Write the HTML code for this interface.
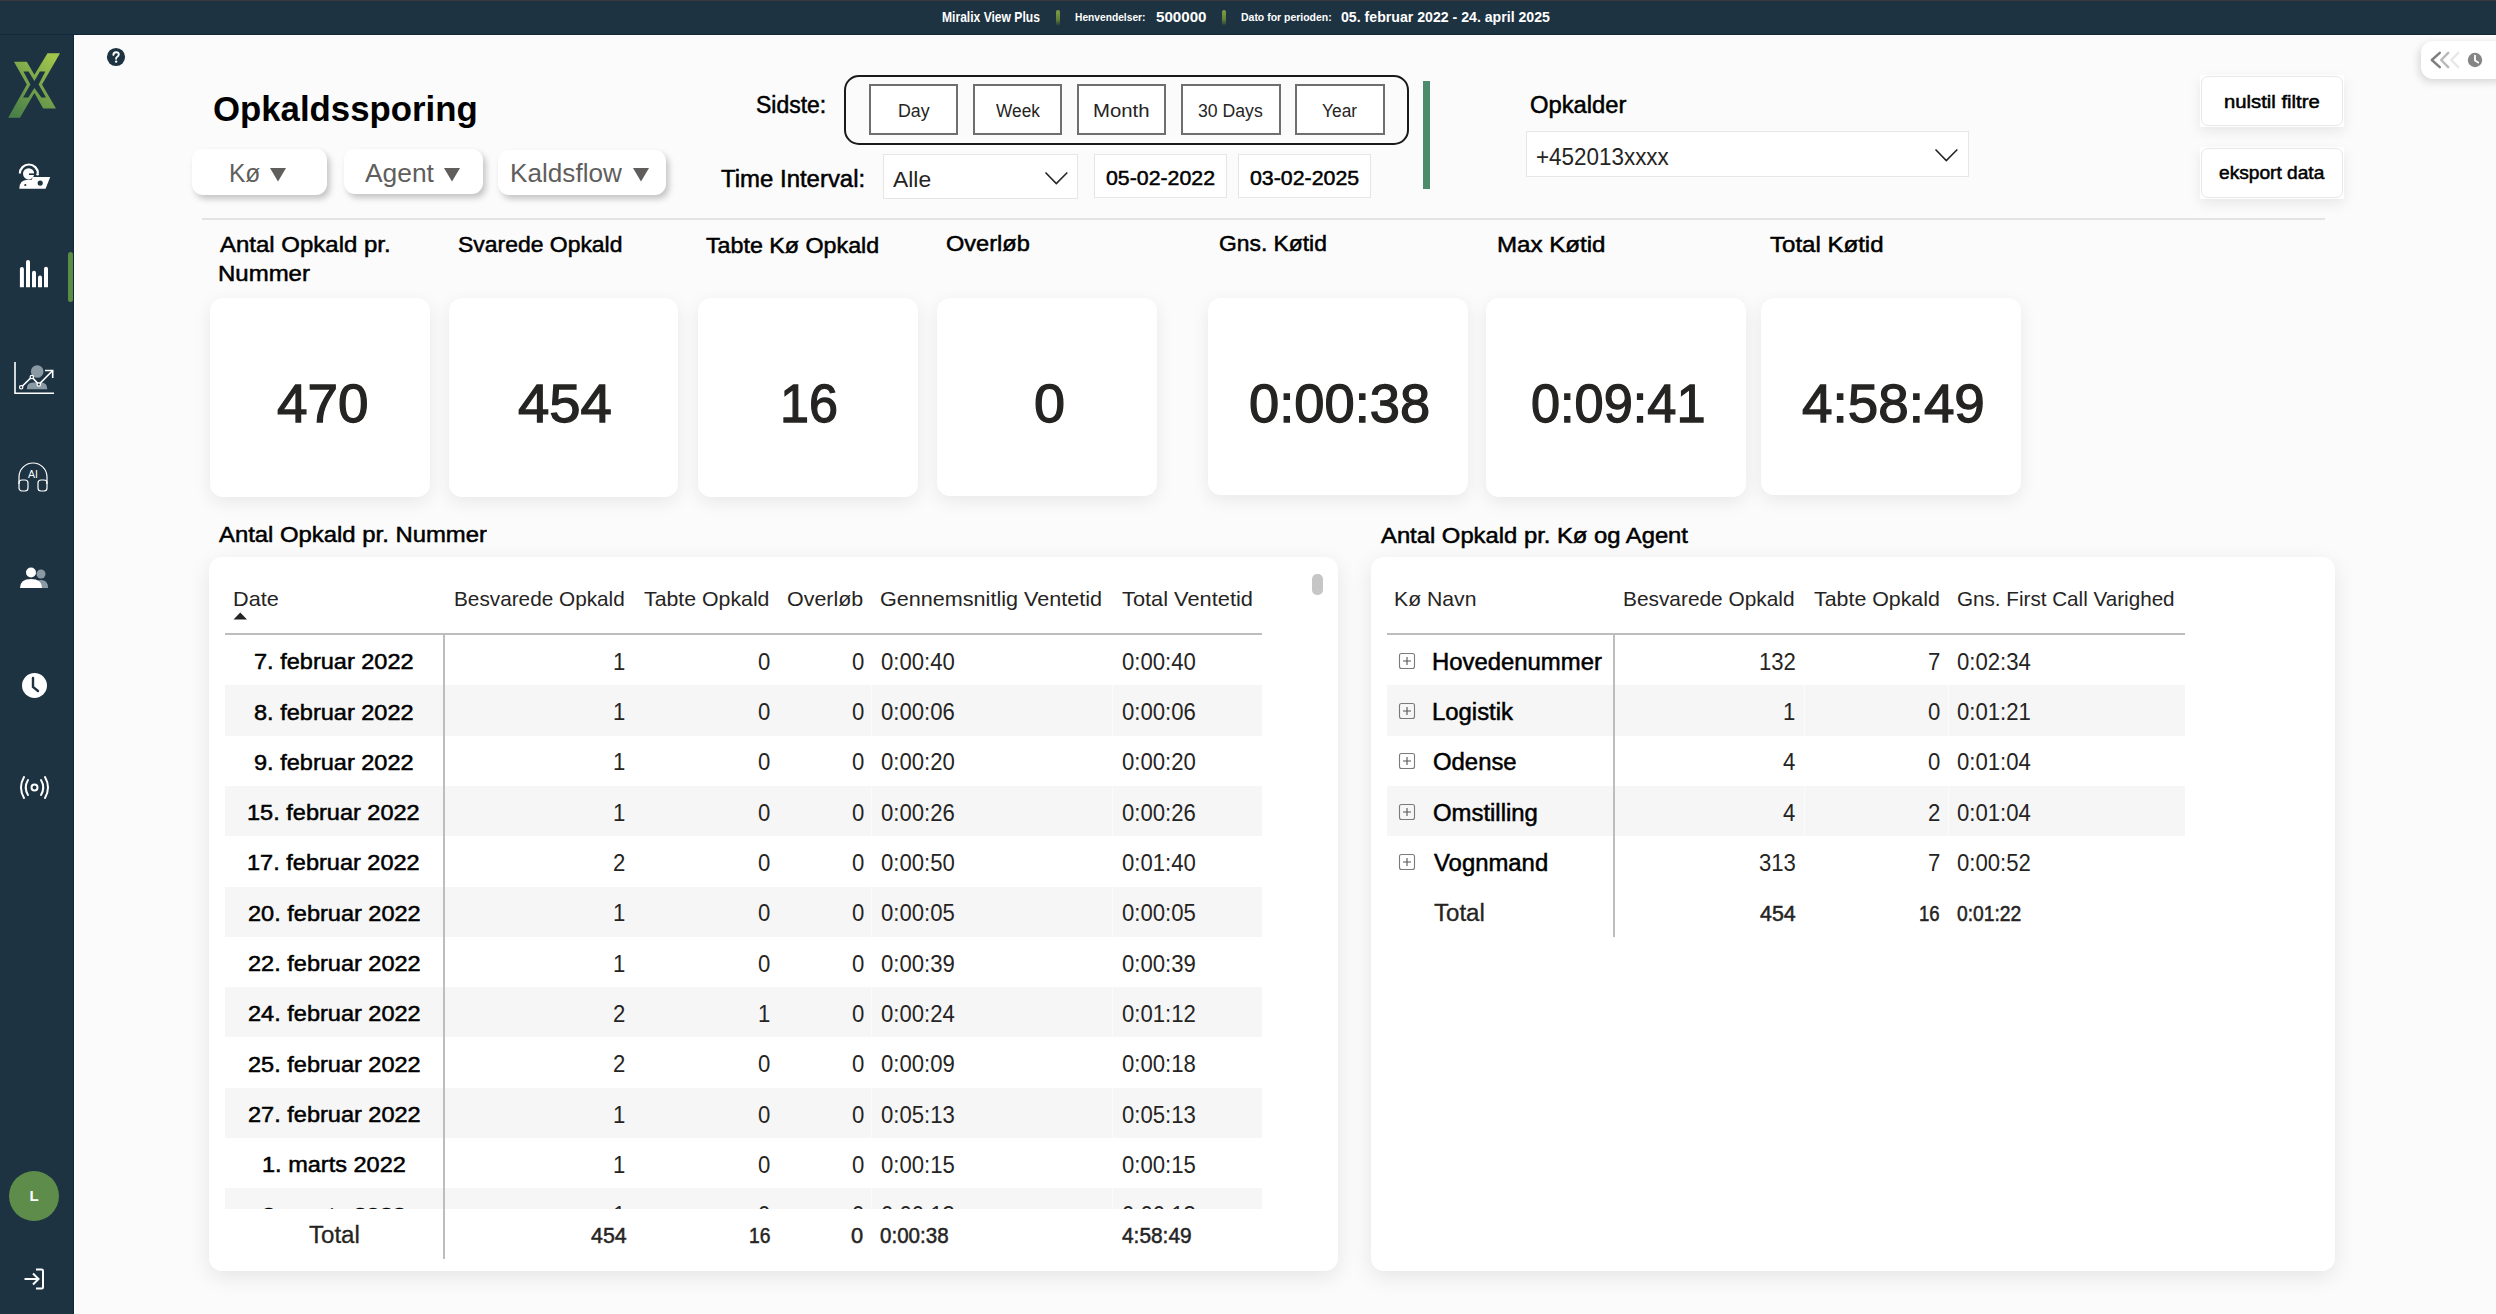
<!DOCTYPE html>
<html><head><meta charset="utf-8"><title>Opkaldssporing</title>
<style>
html,body{margin:0;padding:0;}
body{width:2496px;height:1314px;position:relative;overflow:hidden;background:#fbfbfb;font-family:'Liberation Sans', sans-serif;}
.t{position:absolute;white-space:nowrap;line-height:1;transform-origin:0 50%;}
</style></head><body>
<div style="position:absolute;left:0px;top:0px;width:2496px;height:35px;background:#1d3342;"></div>
<div style="position:absolute;left:0px;top:0px;width:2496px;height:1px;background:#38393c;"></div>
<div style="position:absolute;left:0px;top:35px;width:74px;height:1279px;background:#1d3342;"></div>
<div style="position:absolute;left:0px;top:34px;width:2496px;height:1px;background:#10283a;"></div>
<div style="position:absolute;left:73px;top:35px;width:1px;height:1279px;background:#10283a;"></div>
<div style="position:absolute;left:74px;top:35px;width:2px;height:1279px;background:#ffffff;"></div>
<div style="position:absolute;left:74px;top:35px;width:2422px;height:1px;background:#ffffff;"></div>
<div class="t" style="left:942.11px;top:9.75px;font-size:14.5px;font-weight:700;color:#ffffff;transform:scaleX(0.8338);">Miralix View Plus</div>
<div class="t" style="left:1075.34px;top:12.28px;font-size:11.5px;font-weight:700;color:#ffffff;transform:scaleX(0.8889);">Henvendelser:</div>
<div class="t" style="left:1155.55px;top:9.75px;font-size:14.5px;font-weight:700;color:#ffffff;transform:scaleX(1.0435);">500000</div>
<div class="t" style="left:1241.32px;top:12.28px;font-size:11.5px;font-weight:700;color:#ffffff;transform:scaleX(0.9100);">Dato for perioden:</div>
<div class="t" style="left:1341.43px;top:9.75px;font-size:14.5px;font-weight:700;color:#ffffff;transform:scaleX(0.9745);">05. februar 2022 - 24. april 2025</div>
<div style="position:absolute;left:1056px;top:10px;width:4px;height:16px;border-radius:2px;background:linear-gradient(#7f9f45,#5f7f35 60%,rgba(80,110,50,0));"></div>
<div style="position:absolute;left:1222px;top:10px;width:4px;height:16px;border-radius:2px;background:linear-gradient(#7f9f45,#5f7f35 60%,rgba(80,110,50,0));"></div>
<svg style="position:absolute;left:0;top:0" width="74" height="130" viewBox="0 0 74 130">
<defs><linearGradient id="lg" x1="0.8" y1="0" x2="0.2" y2="1"><stop offset="0" stop-color="#a2c64c"/><stop offset="1" stop-color="#4a8049"/></linearGradient></defs>
<path fill-rule="evenodd" fill="url(#lg)" d="M47.5 53.2 L60 53.2 L42 84.6 L56 108.6 L43.2 108.6 L34.4 93.1 L20 117.7 L8.2 117.7 L26.8 84.6 L14 61.7 L26.8 61.7 L34.4 74.8 Z M23.4 71.5 L28.6 71.5 L34.4 80.9 L39.9 71.5 L45.3 71.5 L38.6 84.6 L46 97.6 L41.4 97.6 L34.4 87.9 L28.3 97.6 L23.1 97.6 L30.4 84.6 Z"/>
</svg>
<div style="position:absolute;left:68px;top:252px;width:5px;height:50px;background:#5c8c46;border-radius:3px;"></div>
<svg style="position:absolute;left:0;top:150px" width="74" height="50" viewBox="0 150 74 50">
<path d="M19.9 173.5 A9 9 0 0 1 37.9 173.5" stroke="#fff" stroke-width="2.2" fill="none"/>
<circle cx="28.6" cy="173.8" r="5.6" fill="#fff"/>
<path d="M29 174.2 H37.5" stroke="#1d3342" stroke-width="1.6"/>
<circle cx="37.6" cy="174.2" r="1.3" fill="#fff"/>
<path d="M19.3 188.7 Q19.5 180 27.5 179.8 L33.2 179.8 L29.2 188.7 Z" fill="#fff"/>
<polygon points="32.8,177 50.2,177 45.6,188.7 28.6,188.7" fill="#fff"/>
<circle cx="40.2" cy="183.1" r="2.6" fill="#1d3342"/>
<circle cx="25.3" cy="185" r="1.1" fill="#1d3342"/>
</svg>
<svg style="position:absolute;left:0;top:250px" width="74" height="45" viewBox="0 250 74 45">
<path d="M19.9 287.3 V269 a2 2 0 0 1 4 0 V287.3 Z" fill="#fff"/>
<path d="M26 287.3 V262 a2 2 0 0 1 4 0 V287.3 Z" fill="#fff"/>
<path d="M32 287.3 V272.8 a2 2 0 0 1 4 0 V287.3 Z" fill="#fff"/>
<path d="M38 287.3 V277.6 a2 2 0 0 1 4 0 V287.3 Z" fill="#fff"/>
<path d="M44 287.3 V268.7 a2 2 0 0 1 4 0 V287.3 Z" fill="#fff"/>
</svg>
<svg style="position:absolute;left:14px;top:360px" width="42" height="36" viewBox="0 0 42 36">
<circle cx="23.2" cy="11.5" r="6.3" fill="#8a9aa5"/>
<path d="M12.7 29.3 Q12.7 22.5 19 22.5 L27 22.5 Q33.3 22.5 33.3 29.3 Z" fill="#8a9aa5"/>
<path d="M1 2 V33.3 H40" stroke="#fff" stroke-width="1.6" fill="none"/>
<polyline points="7.2,27.3 17.8,17 24.8,24.5 38.7,10.5" stroke="#fff" stroke-width="1.6" fill="none"/>
<polyline points="31,10.5 38.7,10.5 38.7,18" stroke="#fff" stroke-width="1.6" fill="none"/>
<circle cx="7.2" cy="27.3" r="1.7" fill="#1d3342" stroke="#fff" stroke-width="1.2"/>
<circle cx="17.8" cy="17" r="1.7" fill="#1d3342" stroke="#fff" stroke-width="1.2"/>
<circle cx="24.8" cy="24.5" r="1.7" fill="#1d3342" stroke="#fff" stroke-width="1.2"/>
</svg>
<svg style="position:absolute;left:16px;top:462px" width="34" height="32" viewBox="0 0 34 32">
<path d="M3 22 V15 A14 14 0 0 1 31 15 V22" stroke="#fff" stroke-width="1.2" fill="none"/>
<rect x="3" y="18" width="9" height="11" rx="3" stroke="#fff" stroke-width="1.2" fill="none"/>
<rect x="22" y="18" width="9" height="11" rx="3" stroke="#fff" stroke-width="1.2" fill="none"/>
<text x="17" y="15.5" font-family="Liberation Sans" font-size="10.5" fill="#fff" text-anchor="middle">AI</text>
</svg>
<svg style="position:absolute;left:18px;top:566px" width="34" height="28" viewBox="0 0 34 28">
<circle cx="23" cy="8" r="4.5" fill="#8a9aa5"/>
<path d="M16 22 Q16 14 23 14 Q30 14 30 22 Z" fill="#8a9aa5"/>
<circle cx="13" cy="6.5" r="5" fill="#fff"/>
<path d="M2 22 Q2 13 13 13 Q24 13 24 22 Z" fill="#fff"/>
</svg>
<svg style="position:absolute;left:20px;top:671px" width="30" height="30" viewBox="0 0 30 30">
<circle cx="14.5" cy="14.5" r="12.5" fill="#fff"/>
<path d="M13 7 V16 L18 20" stroke="#1d3342" stroke-width="2.4" fill="none" stroke-linecap="round"/>
</svg>
<svg style="position:absolute;left:18px;top:774px" width="34" height="28" viewBox="0 0 34 28">
<circle cx="16.5" cy="13.5" r="3" stroke="#fff" stroke-width="2" fill="none"/>
<path d="M10 6 Q5.5 13.5 10 21" stroke="#fff" stroke-width="2" fill="none" stroke-linecap="round"/>
<path d="M23 6 Q27.5 13.5 23 21" stroke="#fff" stroke-width="2" fill="none" stroke-linecap="round"/>
<path d="M6 3 Q0 13.5 6 24" stroke="#fff" stroke-width="2" fill="none" stroke-linecap="round"/>
<path d="M27 3 Q33 13.5 27 24" stroke="#fff" stroke-width="2" fill="none" stroke-linecap="round"/>
</svg>
<div style="position:absolute;left:9px;top:1171px;width:50px;height:50px;background:#5e8c4a;border-radius:50%;"></div>
<div class="t" style="left:29.46px;top:1187.53px;font-size:15px;font-weight:700;color:#fff;">L</div>
<svg style="position:absolute;left:22px;top:1266px" width="26" height="26" viewBox="0 0 26 26">
<path d="M14 3.5 H19.5 Q21 3.5 21 5 V21 Q21 22.5 19.5 22.5 H14" stroke="#fff" stroke-width="2" fill="none"/>
<path d="M2.5 13 H16 M11 7.5 L16.5 13 L11 18.5" stroke="#fff" stroke-width="2" fill="none"/>
</svg>
<svg style="position:absolute;left:105.5px;top:46.5px" width="20" height="20" viewBox="0 0 20 20">
<circle cx="10" cy="10" r="9.1" fill="#1d3342"/>
<path d="M7.4 7.9 Q7.4 5.2 10.1 5.2 Q12.8 5.2 12.8 7.6 Q12.8 9.1 11 10 Q10.1 10.5 10.1 11.8" stroke="#fff" stroke-width="1.9" fill="none" stroke-linecap="round"/>
<circle cx="10.1" cy="14.6" r="1.2" fill="#fff"/>
</svg>
<div class="t" style="left:212.81px;top:91.93px;font-size:34.4px;font-weight:700;color:#000000;transform:scaleX(1.0110);">Opkaldssporing</div>
<div style="position:absolute;left:192px;top:149px;width:135px;height:46px;background:#fff;border-radius:11px;box-shadow:3px 4px 6px rgba(0,0,0,0.22);"></div>
<div class="t" style="left:228.54px;top:160.68px;font-size:25px;font-weight:400;color:#605e5c;transform:scaleX(0.9812);">Kø</div>
<svg style="position:absolute;left:270.4px;top:168px" width="16" height="14" viewBox="0 0 16 14"><polygon points="0,0 16,0 8,13.6" fill="#605e5c"/></svg>
<div style="position:absolute;left:344px;top:149px;width:139px;height:45px;background:#fff;border-radius:11px;box-shadow:3px 4px 6px rgba(0,0,0,0.22);"></div>
<div class="t" style="left:364.60px;top:160.68px;font-size:25px;font-weight:400;color:#605e5c;transform:scaleX(1.0549);">Agent</div>
<svg style="position:absolute;left:444px;top:168px" width="16" height="14" viewBox="0 0 16 14"><polygon points="0,0 16,0 8,13.6" fill="#605e5c"/></svg>
<div style="position:absolute;left:498px;top:150px;width:168px;height:45px;background:#fff;border-radius:11px;box-shadow:3px 4px 6px rgba(0,0,0,0.22);"></div>
<div class="t" style="left:509.81px;top:160.68px;font-size:25px;font-weight:400;color:#605e5c;transform:scaleX(1.0454);">Kaldsflow</div>
<svg style="position:absolute;left:632.6px;top:168px" width="16" height="14" viewBox="0 0 16 14"><polygon points="0,0 16,0 8,13.6" fill="#605e5c"/></svg>
<div class="t" style="left:756.12px;top:93.66px;font-size:23px;font-weight:400;color:#000;-webkit-text-stroke:0.5px #000;transform:scaleX(0.9976);">Sidste:</div>
<div style="position:absolute;left:844px;top:75px;width:565px;height:70px;box-sizing:border-box;border:2.2px solid #1a1a1a;border-radius:15px;"></div>
<div style="position:absolute;left:869px;top:84px;width:89px;height:51px;box-sizing:border-box;border:2px solid #6f6f6f;background:#fff;"></div>
<div class="t" style="left:897.57px;top:101.54px;font-size:18.3px;font-weight:400;color:#252423;transform:scaleX(0.9740);">Day</div>
<div style="position:absolute;left:973px;top:84px;width:89px;height:51px;box-sizing:border-box;border:2px solid #6f6f6f;background:#fff;"></div>
<div class="t" style="left:995.61px;top:101.54px;font-size:18.3px;font-weight:400;color:#252423;transform:scaleX(0.9463);">Week</div>
<div style="position:absolute;left:1077px;top:84px;width:89px;height:51px;box-sizing:border-box;border:2px solid #6f6f6f;background:#fff;"></div>
<div class="t" style="left:1093.37px;top:101.54px;font-size:18.3px;font-weight:400;color:#252423;transform:scaleX(1.1116);">Month</div>
<div style="position:absolute;left:1181px;top:84px;width:100px;height:51px;box-sizing:border-box;border:2px solid #6f6f6f;background:#fff;"></div>
<div class="t" style="left:1198.49px;top:101.54px;font-size:18.3px;font-weight:400;color:#252423;transform:scaleX(0.9652);">30 Days</div>
<div style="position:absolute;left:1295px;top:84px;width:90px;height:51px;box-sizing:border-box;border:2px solid #6f6f6f;background:#fff;"></div>
<div class="t" style="left:1322.17px;top:101.54px;font-size:18.3px;font-weight:400;color:#252423;transform:scaleX(0.9494);">Year</div>
<div class="t" style="left:721.02px;top:168.37px;font-size:23px;font-weight:400;color:#000;-webkit-text-stroke:0.5px #000;transform:scaleX(1.0411);">Time Interval:</div>
<div style="position:absolute;left:883px;top:154px;width:195px;height:45px;box-sizing:border-box;border:1.5px solid #e6e6e6;background:#fff;"></div>
<div class="t" style="left:893.30px;top:168.96px;font-size:22.3px;font-weight:400;color:#252423;transform:scaleX(1.0242);">Alle</div>
<svg style="position:absolute;left:1044px;top:171px" width="25" height="15" viewBox="0 0 25 15"><polyline points="1.5,1.5 12.3,12.5 23.3,1.5" stroke="#252423" stroke-width="1.6" fill="none"/></svg>
<div style="position:absolute;left:1094px;top:154px;width:133px;height:44px;box-sizing:border-box;border:1.5px solid #e6e6e6;background:#fff;"></div>
<div class="t" style="left:1105.80px;top:166.95px;font-size:21px;font-weight:400;color:#000;-webkit-text-stroke:0.5px #000;transform:scaleX(1.0149);">05-02-2022</div>
<div style="position:absolute;left:1238px;top:154px;width:133px;height:44px;box-sizing:border-box;border:1.5px solid #e6e6e6;background:#fff;"></div>
<div class="t" style="left:1249.50px;top:166.95px;font-size:21px;font-weight:400;color:#000;-webkit-text-stroke:0.5px #000;transform:scaleX(1.0157);">03-02-2025</div>
<div style="position:absolute;left:1423px;top:81px;width:7px;height:108px;background:#4a8c6c;"></div>
<div class="t" style="left:1530.18px;top:93.56px;font-size:23px;font-weight:400;color:#000;-webkit-text-stroke:0.5px #000;transform:scaleX(1.0339);">Opkalder</div>
<div style="position:absolute;left:1526px;top:131px;width:443px;height:46px;box-sizing:border-box;border:1.5px solid #e6e6e6;background:#fff;"></div>
<div class="t" style="left:1535.88px;top:145.56px;font-size:23px;font-weight:400;color:#252423;transform:scaleX(0.9749);">+452013xxxx</div>
<svg style="position:absolute;left:1934px;top:148px" width="25" height="15" viewBox="0 0 25 15"><polyline points="1.5,1.5 12.3,12.5 23.3,1.5" stroke="#252423" stroke-width="1.6" fill="none"/></svg>
<div style="position:absolute;left:2200px;top:75px;width:144px;height:52px;background:#fff;box-shadow:0 5px 12px rgba(0,0,0,0.08);"></div>
<div style="position:absolute;left:2201px;top:76px;width:142px;height:50px;box-sizing:border-box;border:1.6px solid #e8e8e8;background:#fff;border-radius:7px;"></div>
<div class="t" style="left:2224.13px;top:92.69px;font-size:18px;font-weight:400;color:#000;-webkit-text-stroke:0.5px #000;transform:scaleX(1.1256);">nulstil filtre</div>
<div style="position:absolute;left:2200px;top:147px;width:144px;height:52px;background:#fff;box-shadow:0 5px 12px rgba(0,0,0,0.08);"></div>
<div style="position:absolute;left:2201px;top:148px;width:142px;height:50px;box-sizing:border-box;border:1.6px solid #e8e8e8;background:#fff;border-radius:7px;"></div>
<div class="t" style="left:2218.98px;top:164.49px;font-size:18px;font-weight:400;color:#000;-webkit-text-stroke:0.5px #000;transform:scaleX(1.0633);">eksport data</div>
<div style="position:absolute;left:2421px;top:41px;width:90px;height:38px;background:#fff;border-radius:12px;box-shadow:-2px 3px 8px rgba(0,0,0,0.15);"></div>
<svg style="position:absolute;left:2428px;top:50px" width="60" height="20" viewBox="0 0 60 20">
<g fill="none" stroke-width="2.4" stroke-linecap="round" stroke-linejoin="round">
<polyline points="11.8,2.8 3.8,10 11.8,17.2" stroke="#7d7d7d"/>
<polyline points="20.2,2.8 13.2,10 20.2,17.2" stroke="#b8b8b8"/>
<polyline points="30.2,2.8 23.2,10 30.2,17.2" stroke="#e8e8e8"/>
</g>
<circle cx="47" cy="10" r="7.2" fill="#858585"/>
<path d="M47 5.6 V10.6 L50.2 12.6" stroke="#fff" stroke-width="1.8" fill="none" stroke-linecap="round" stroke-linejoin="round"/>
</svg>
<div style="position:absolute;left:202px;top:218px;width:2123px;height:2px;background:#e4e4e4;"></div>
<div class="t" style="left:219.75px;top:233.61px;font-size:22px;font-weight:400;color:#000;-webkit-text-stroke:0.5px #000;transform:scaleX(1.0903);">Antal Opkald pr.</div>
<div class="t" style="left:457.72px;top:233.61px;font-size:22px;font-weight:400;color:#000;-webkit-text-stroke:0.5px #000;transform:scaleX(1.0424);">Svarede Opkald</div>
<div class="t" style="left:705.79px;top:235.01px;font-size:22px;font-weight:400;color:#000;-webkit-text-stroke:0.5px #000;transform:scaleX(1.0567);">Tabte Kø Opkald</div>
<div class="t" style="left:945.99px;top:233.41px;font-size:22px;font-weight:400;color:#000;-webkit-text-stroke:0.5px #000;transform:scaleX(1.0702);">Overløb</div>
<div class="t" style="left:1219.11px;top:233.41px;font-size:22px;font-weight:400;color:#000;-webkit-text-stroke:0.5px #000;transform:scaleX(1.0383);">Gns. Køtid</div>
<div class="t" style="left:1496.52px;top:233.71px;font-size:22px;font-weight:400;color:#000;-webkit-text-stroke:0.5px #000;transform:scaleX(1.0959);">Max Køtid</div>
<div class="t" style="left:1770.37px;top:233.71px;font-size:22px;font-weight:400;color:#000;-webkit-text-stroke:0.5px #000;transform:scaleX(1.0923);">Total Køtid</div>
<div class="t" style="left:217.83px;top:263.11px;font-size:22px;font-weight:400;color:#000;-webkit-text-stroke:0.5px #000;transform:scaleX(1.0903);">Nummer</div>
<div style="position:absolute;left:210px;top:298px;width:220px;height:199px;background:#fff;border-radius:13px;box-shadow:0 5px 18px rgba(0,0,0,0.08);"></div>
<div class="t" style="left:276.95px;top:376.65px;font-size:54.5px;font-weight:400;color:#252423;-webkit-text-stroke:1.3px #252423;transform:scaleX(1.0063);">470</div>
<div style="position:absolute;left:449px;top:298px;width:229px;height:199px;background:#fff;border-radius:13px;box-shadow:0 5px 18px rgba(0,0,0,0.08);"></div>
<div class="t" style="left:518.02px;top:376.65px;font-size:54.5px;font-weight:400;color:#252423;-webkit-text-stroke:1.3px #252423;transform:scaleX(1.0327);">454</div>
<div style="position:absolute;left:698px;top:298px;width:220px;height:199px;background:#fff;border-radius:13px;box-shadow:0 5px 18px rgba(0,0,0,0.08);"></div>
<div class="t" style="left:779.74px;top:376.65px;font-size:54.5px;font-weight:400;color:#252423;-webkit-text-stroke:1.3px #252423;transform:scaleX(0.9571);">16</div>
<div style="position:absolute;left:937px;top:298px;width:220px;height:198px;background:#fff;border-radius:13px;box-shadow:0 5px 18px rgba(0,0,0,0.08);"></div>
<div class="t" style="left:1033.72px;top:376.65px;font-size:54.5px;font-weight:400;color:#252423;-webkit-text-stroke:1.3px #252423;transform:scaleX(1.0245);">0</div>
<div style="position:absolute;left:1208px;top:298px;width:260px;height:197px;background:#fff;border-radius:13px;box-shadow:0 5px 18px rgba(0,0,0,0.08);"></div>
<div class="t" style="left:1249.48px;top:376.65px;font-size:54.5px;font-weight:400;color:#252423;-webkit-text-stroke:1.3px #252423;transform:scaleX(0.9961);">0:00:38</div>
<div style="position:absolute;left:1486px;top:298px;width:260px;height:199px;background:#fff;border-radius:13px;box-shadow:0 5px 18px rgba(0,0,0,0.08);"></div>
<div class="t" style="left:1531.26px;top:376.65px;font-size:54.5px;font-weight:400;color:#252423;-webkit-text-stroke:1.3px #252423;transform:scaleX(0.9598);">0:09:41</div>
<div style="position:absolute;left:1761px;top:298px;width:260px;height:197px;background:#fff;border-radius:13px;box-shadow:0 5px 18px rgba(0,0,0,0.08);"></div>
<div class="t" style="left:1802.05px;top:376.65px;font-size:54.5px;font-weight:400;color:#252423;-webkit-text-stroke:1.3px #252423;transform:scaleX(1.0055);">4:58:49</div>
<div class="t" style="left:219.00px;top:524.41px;font-size:22px;font-weight:400;color:#000;-webkit-text-stroke:0.5px #000;transform:scaleX(1.0847);">Antal Opkald pr. Nummer</div>
<div style="position:absolute;left:209px;top:557px;width:1129px;height:714px;background:#fff;border-radius:13px;box-shadow:0 6px 22px rgba(0,0,0,0.09);"></div>
<div style="position:absolute;left:1312px;top:574px;width:10.5px;height:21px;background:#c6c6c6;border-radius:5px;"></div>
<div class="t" style="left:232.67px;top:588.25px;font-size:21px;font-weight:400;color:#252423;transform:scaleX(1.0315);">Date</div>
<div class="t" style="left:453.64px;top:588.25px;font-size:21px;font-weight:400;color:#252423;transform:scaleX(0.9883);">Besvarede Opkald</div>
<div class="t" style="left:643.77px;top:588.25px;font-size:21px;font-weight:400;color:#252423;transform:scaleX(1.0139);">Tabte Opkald</div>
<div class="t" style="left:786.64px;top:588.25px;font-size:21px;font-weight:400;color:#252423;transform:scaleX(1.0210);">Overløb</div>
<div class="t" style="left:880.32px;top:588.25px;font-size:21px;font-weight:400;color:#252423;transform:scaleX(1.0282);">Gennemsnitlig Ventetid</div>
<div class="t" style="left:1122.06px;top:588.25px;font-size:21px;font-weight:400;color:#252423;transform:scaleX(1.0384);">Total Ventetid</div>
<svg style="position:absolute;left:233px;top:612px" width="15" height="8" viewBox="0 0 15 8"><polygon points="0.5,7.5 7.25,0.5 14,7.5" fill="#252423"/></svg>
<div style="position:absolute;left:225px;top:633px;width:1037px;height:2px;background:#bdbdbd;"></div>
<div style="position:absolute;left:0;top:0;width:2496px;height:1209px;overflow:hidden">
<div style="position:absolute;left:225px;top:685.3px;width:1037px;height:50.3px;background:#f6f6f6;"></div>
<div style="position:absolute;left:225px;top:785.9px;width:1037px;height:50.3px;background:#f6f6f6;"></div>
<div style="position:absolute;left:225px;top:886.5px;width:1037px;height:50.3px;background:#f6f6f6;"></div>
<div style="position:absolute;left:225px;top:987.1px;width:1037px;height:50.3px;background:#f6f6f6;"></div>
<div style="position:absolute;left:225px;top:1087.7px;width:1037px;height:50.3px;background:#f6f6f6;"></div>
<div style="position:absolute;left:225px;top:1188.3px;width:1037px;height:50.3px;background:#f6f6f6;"></div>
<div style="position:absolute;left:871px;top:685.3px;width:1px;height:50.3px;background:#fbfbfb;"></div>
<div style="position:absolute;left:1112px;top:685.3px;width:1px;height:50.3px;background:#fbfbfb;"></div>
<div style="position:absolute;left:871px;top:785.9px;width:1px;height:50.3px;background:#fbfbfb;"></div>
<div style="position:absolute;left:1112px;top:785.9px;width:1px;height:50.3px;background:#fbfbfb;"></div>
<div style="position:absolute;left:871px;top:886.5px;width:1px;height:50.3px;background:#fbfbfb;"></div>
<div style="position:absolute;left:1112px;top:886.5px;width:1px;height:50.3px;background:#fbfbfb;"></div>
<div style="position:absolute;left:871px;top:987.1px;width:1px;height:50.3px;background:#fbfbfb;"></div>
<div style="position:absolute;left:1112px;top:987.1px;width:1px;height:50.3px;background:#fbfbfb;"></div>
<div style="position:absolute;left:871px;top:1087.7px;width:1px;height:50.3px;background:#fbfbfb;"></div>
<div style="position:absolute;left:1112px;top:1087.7px;width:1px;height:50.3px;background:#fbfbfb;"></div>
<div style="position:absolute;left:871px;top:1188.3px;width:1px;height:50.3px;background:#fbfbfb;"></div>
<div style="position:absolute;left:1112px;top:1188.3px;width:1px;height:50.3px;background:#fbfbfb;"></div>
<div class="t" style="left:254.22px;top:651.29px;font-size:22.5px;font-weight:400;color:#000;-webkit-text-stroke:0.5px #000;transform:scaleX(1.0459);">7. februar 2022</div>
<div class="t" style="left:612.72px;top:650.87px;font-size:23px;font-weight:400;color:#252423;transform:scaleX(0.9616);">1</div>
<div class="t" style="left:758.00px;top:650.87px;font-size:23px;font-weight:400;color:#252423;transform:scaleX(0.9616);">0</div>
<div class="t" style="left:851.50px;top:650.87px;font-size:23px;font-weight:400;color:#252423;transform:scaleX(0.9616);">0</div>
<div class="t" style="left:880.52px;top:650.87px;font-size:23px;font-weight:400;color:#252423;transform:scaleX(0.9616);">0:00:40</div>
<div class="t" style="left:1121.62px;top:650.87px;font-size:23px;font-weight:400;color:#252423;transform:scaleX(0.9616);">0:00:40</div>
<div class="t" style="left:254.28px;top:701.59px;font-size:22.5px;font-weight:400;color:#000;-webkit-text-stroke:0.5px #000;transform:scaleX(1.0459);">8. februar 2022</div>
<div class="t" style="left:612.72px;top:701.16px;font-size:23px;font-weight:400;color:#252423;transform:scaleX(0.9616);">1</div>
<div class="t" style="left:758.00px;top:701.16px;font-size:23px;font-weight:400;color:#252423;transform:scaleX(0.9616);">0</div>
<div class="t" style="left:851.50px;top:701.16px;font-size:23px;font-weight:400;color:#252423;transform:scaleX(0.9616);">0</div>
<div class="t" style="left:880.52px;top:701.16px;font-size:23px;font-weight:400;color:#252423;transform:scaleX(0.9616);">0:00:06</div>
<div class="t" style="left:1121.62px;top:701.16px;font-size:23px;font-weight:400;color:#252423;transform:scaleX(0.9616);">0:00:06</div>
<div class="t" style="left:254.28px;top:751.89px;font-size:22.5px;font-weight:400;color:#000;-webkit-text-stroke:0.5px #000;transform:scaleX(1.0459);">9. februar 2022</div>
<div class="t" style="left:612.72px;top:751.47px;font-size:23px;font-weight:400;color:#252423;transform:scaleX(0.9616);">1</div>
<div class="t" style="left:758.00px;top:751.47px;font-size:23px;font-weight:400;color:#252423;transform:scaleX(0.9616);">0</div>
<div class="t" style="left:851.50px;top:751.47px;font-size:23px;font-weight:400;color:#252423;transform:scaleX(0.9616);">0</div>
<div class="t" style="left:880.52px;top:751.47px;font-size:23px;font-weight:400;color:#252423;transform:scaleX(0.9616);">0:00:20</div>
<div class="t" style="left:1121.62px;top:751.47px;font-size:23px;font-weight:400;color:#252423;transform:scaleX(0.9616);">0:00:20</div>
<div class="t" style="left:247.34px;top:802.19px;font-size:22.5px;font-weight:400;color:#000;-webkit-text-stroke:0.5px #000;transform:scaleX(1.0459);">15. februar 2022</div>
<div class="t" style="left:612.72px;top:801.76px;font-size:23px;font-weight:400;color:#252423;transform:scaleX(0.9616);">1</div>
<div class="t" style="left:758.00px;top:801.76px;font-size:23px;font-weight:400;color:#252423;transform:scaleX(0.9616);">0</div>
<div class="t" style="left:851.50px;top:801.76px;font-size:23px;font-weight:400;color:#252423;transform:scaleX(0.9616);">0</div>
<div class="t" style="left:880.52px;top:801.76px;font-size:23px;font-weight:400;color:#252423;transform:scaleX(0.9616);">0:00:26</div>
<div class="t" style="left:1121.62px;top:801.76px;font-size:23px;font-weight:400;color:#252423;transform:scaleX(0.9616);">0:00:26</div>
<div class="t" style="left:247.34px;top:852.49px;font-size:22.5px;font-weight:400;color:#000;-webkit-text-stroke:0.5px #000;transform:scaleX(1.0459);">17. februar 2022</div>
<div class="t" style="left:612.83px;top:852.07px;font-size:23px;font-weight:400;color:#252423;transform:scaleX(0.9616);">2</div>
<div class="t" style="left:758.00px;top:852.07px;font-size:23px;font-weight:400;color:#252423;transform:scaleX(0.9616);">0</div>
<div class="t" style="left:851.50px;top:852.07px;font-size:23px;font-weight:400;color:#252423;transform:scaleX(0.9616);">0</div>
<div class="t" style="left:880.52px;top:852.07px;font-size:23px;font-weight:400;color:#252423;transform:scaleX(0.9616);">0:00:50</div>
<div class="t" style="left:1121.62px;top:852.07px;font-size:23px;font-weight:400;color:#252423;transform:scaleX(0.9616);">0:01:40</div>
<div class="t" style="left:247.63px;top:902.79px;font-size:22.5px;font-weight:400;color:#000;-webkit-text-stroke:0.5px #000;transform:scaleX(1.0459);">20. februar 2022</div>
<div class="t" style="left:612.72px;top:902.37px;font-size:23px;font-weight:400;color:#252423;transform:scaleX(0.9616);">1</div>
<div class="t" style="left:758.00px;top:902.37px;font-size:23px;font-weight:400;color:#252423;transform:scaleX(0.9616);">0</div>
<div class="t" style="left:851.50px;top:902.37px;font-size:23px;font-weight:400;color:#252423;transform:scaleX(0.9616);">0</div>
<div class="t" style="left:880.52px;top:902.37px;font-size:23px;font-weight:400;color:#252423;transform:scaleX(0.9616);">0:00:05</div>
<div class="t" style="left:1121.62px;top:902.37px;font-size:23px;font-weight:400;color:#252423;transform:scaleX(0.9616);">0:00:05</div>
<div class="t" style="left:247.63px;top:953.09px;font-size:22.5px;font-weight:400;color:#000;-webkit-text-stroke:0.5px #000;transform:scaleX(1.0459);">22. februar 2022</div>
<div class="t" style="left:612.72px;top:952.66px;font-size:23px;font-weight:400;color:#252423;transform:scaleX(0.9616);">1</div>
<div class="t" style="left:758.00px;top:952.66px;font-size:23px;font-weight:400;color:#252423;transform:scaleX(0.9616);">0</div>
<div class="t" style="left:851.50px;top:952.66px;font-size:23px;font-weight:400;color:#252423;transform:scaleX(0.9616);">0</div>
<div class="t" style="left:880.52px;top:952.66px;font-size:23px;font-weight:400;color:#252423;transform:scaleX(0.9616);">0:00:39</div>
<div class="t" style="left:1121.62px;top:952.66px;font-size:23px;font-weight:400;color:#252423;transform:scaleX(0.9616);">0:00:39</div>
<div class="t" style="left:247.63px;top:1003.39px;font-size:22.5px;font-weight:400;color:#000;-webkit-text-stroke:0.5px #000;transform:scaleX(1.0459);">24. februar 2022</div>
<div class="t" style="left:612.83px;top:1002.96px;font-size:23px;font-weight:400;color:#252423;transform:scaleX(0.9616);">2</div>
<div class="t" style="left:758.22px;top:1002.96px;font-size:23px;font-weight:400;color:#252423;transform:scaleX(0.9616);">1</div>
<div class="t" style="left:851.50px;top:1002.96px;font-size:23px;font-weight:400;color:#252423;transform:scaleX(0.9616);">0</div>
<div class="t" style="left:880.52px;top:1002.96px;font-size:23px;font-weight:400;color:#252423;transform:scaleX(0.9616);">0:00:24</div>
<div class="t" style="left:1121.62px;top:1002.96px;font-size:23px;font-weight:400;color:#252423;transform:scaleX(0.9616);">0:01:12</div>
<div class="t" style="left:247.63px;top:1053.69px;font-size:22.5px;font-weight:400;color:#000;-webkit-text-stroke:0.5px #000;transform:scaleX(1.0459);">25. februar 2022</div>
<div class="t" style="left:612.83px;top:1053.27px;font-size:23px;font-weight:400;color:#252423;transform:scaleX(0.9616);">2</div>
<div class="t" style="left:758.00px;top:1053.27px;font-size:23px;font-weight:400;color:#252423;transform:scaleX(0.9616);">0</div>
<div class="t" style="left:851.50px;top:1053.27px;font-size:23px;font-weight:400;color:#252423;transform:scaleX(0.9616);">0</div>
<div class="t" style="left:880.52px;top:1053.27px;font-size:23px;font-weight:400;color:#252423;transform:scaleX(0.9616);">0:00:09</div>
<div class="t" style="left:1121.62px;top:1053.27px;font-size:23px;font-weight:400;color:#252423;transform:scaleX(0.9616);">0:00:18</div>
<div class="t" style="left:247.63px;top:1103.99px;font-size:22.5px;font-weight:400;color:#000;-webkit-text-stroke:0.5px #000;transform:scaleX(1.0459);">27. februar 2022</div>
<div class="t" style="left:612.72px;top:1103.57px;font-size:23px;font-weight:400;color:#252423;transform:scaleX(0.9616);">1</div>
<div class="t" style="left:758.00px;top:1103.57px;font-size:23px;font-weight:400;color:#252423;transform:scaleX(0.9616);">0</div>
<div class="t" style="left:851.50px;top:1103.57px;font-size:23px;font-weight:400;color:#252423;transform:scaleX(0.9616);">0</div>
<div class="t" style="left:880.52px;top:1103.57px;font-size:23px;font-weight:400;color:#252423;transform:scaleX(0.9616);">0:05:13</div>
<div class="t" style="left:1121.62px;top:1103.57px;font-size:23px;font-weight:400;color:#252423;transform:scaleX(0.9616);">0:05:13</div>
<div class="t" style="left:261.75px;top:1154.29px;font-size:22.5px;font-weight:400;color:#000;-webkit-text-stroke:0.5px #000;transform:scaleX(1.0459);">1. marts 2022</div>
<div class="t" style="left:612.72px;top:1153.87px;font-size:23px;font-weight:400;color:#252423;transform:scaleX(0.9616);">1</div>
<div class="t" style="left:758.00px;top:1153.87px;font-size:23px;font-weight:400;color:#252423;transform:scaleX(0.9616);">0</div>
<div class="t" style="left:851.50px;top:1153.87px;font-size:23px;font-weight:400;color:#252423;transform:scaleX(0.9616);">0</div>
<div class="t" style="left:880.52px;top:1153.87px;font-size:23px;font-weight:400;color:#252423;transform:scaleX(0.9616);">0:00:15</div>
<div class="t" style="left:1121.62px;top:1153.87px;font-size:23px;font-weight:400;color:#252423;transform:scaleX(0.9616);">0:00:15</div>
<div class="t" style="left:262.05px;top:1204.59px;font-size:22.5px;font-weight:400;color:#000;-webkit-text-stroke:0.5px #000;transform:scaleX(1.0459);">2. marts 2022</div>
<div class="t" style="left:612.72px;top:1204.16px;font-size:23px;font-weight:400;color:#252423;transform:scaleX(0.9616);">1</div>
<div class="t" style="left:758.00px;top:1204.16px;font-size:23px;font-weight:400;color:#252423;transform:scaleX(0.9616);">0</div>
<div class="t" style="left:851.50px;top:1204.16px;font-size:23px;font-weight:400;color:#252423;transform:scaleX(0.9616);">0</div>
<div class="t" style="left:880.52px;top:1204.16px;font-size:23px;font-weight:400;color:#252423;transform:scaleX(0.9616);">0:00:13</div>
<div class="t" style="left:1121.62px;top:1204.16px;font-size:23px;font-weight:400;color:#252423;transform:scaleX(0.9616);">0:00:13</div>
</div>
<div style="position:absolute;left:443px;top:635px;width:2px;height:624px;background:#bdbdbd;"></div>
<div class="t" style="left:309.17px;top:1224.07px;font-size:23px;font-weight:400;color:#252423;-webkit-text-stroke:0.3px #252423;transform:scaleX(1.0456);">Total</div>
<div class="t" style="left:590.62px;top:1224.91px;font-size:22px;font-weight:400;color:#252423;-webkit-text-stroke:0.5px #252423;transform:scaleX(0.9710);">454</div>
<div class="t" style="left:748.60px;top:1224.91px;font-size:22px;font-weight:400;color:#252423;-webkit-text-stroke:0.5px #252423;transform:scaleX(0.8771);">16</div>
<div class="t" style="left:851.38px;top:1224.91px;font-size:22px;font-weight:400;color:#252423;-webkit-text-stroke:0.5px #252423;transform:scaleX(0.9943);">0</div>
<div class="t" style="left:880.13px;top:1224.91px;font-size:22px;font-weight:400;color:#252423;-webkit-text-stroke:0.5px #252423;transform:scaleX(0.9342);">0:00:38</div>
<div class="t" style="left:1121.83px;top:1224.91px;font-size:22px;font-weight:400;color:#252423;-webkit-text-stroke:0.5px #252423;transform:scaleX(0.9480);">4:58:49</div>
<div class="t" style="left:1381.25px;top:525.41px;font-size:22px;font-weight:400;color:#000;-webkit-text-stroke:0.5px #000;transform:scaleX(1.0819);">Antal Opkald pr. Kø og Agent</div>
<div style="position:absolute;left:1371px;top:557px;width:964px;height:714px;background:#fff;border-radius:13px;box-shadow:0 6px 22px rgba(0,0,0,0.09);"></div>
<div class="t" style="left:1394.30px;top:588.25px;font-size:21px;font-weight:400;color:#252423;transform:scaleX(1.0096);">Kø Navn</div>
<div class="t" style="left:1623.33px;top:588.25px;font-size:21px;font-weight:400;color:#252423;transform:scaleX(0.9930);">Besvarede Opkald</div>
<div class="t" style="left:1813.57px;top:588.25px;font-size:21px;font-weight:400;color:#252423;transform:scaleX(1.0172);">Tabte Opkald</div>
<div class="t" style="left:1956.77px;top:588.25px;font-size:21px;font-weight:400;color:#252423;transform:scaleX(0.9830);">Gns. First Call Varighed</div>
<div style="position:absolute;left:1387px;top:633px;width:798px;height:2px;background:#bdbdbd;"></div>
<div style="position:absolute;left:1387px;top:685.3px;width:798px;height:50.3px;background:#f6f6f6;"></div>
<div style="position:absolute;left:1387px;top:785.9px;width:798px;height:50.3px;background:#f6f6f6;"></div>
<div style="position:absolute;left:1613px;top:635px;width:2px;height:302px;background:#bdbdbd;"></div>
<div style="position:absolute;left:1804px;top:685.3px;width:1px;height:50.3px;background:#fbfbfb;"></div>
<div style="position:absolute;left:1948px;top:685.3px;width:1px;height:50.3px;background:#fbfbfb;"></div>
<div style="position:absolute;left:1804px;top:785.9px;width:1px;height:50.3px;background:#fbfbfb;"></div>
<div style="position:absolute;left:1948px;top:785.9px;width:1px;height:50.3px;background:#fbfbfb;"></div>
<svg style="position:absolute;left:1398px;top:651.6px" width="18" height="18" viewBox="0 0 18 18"><rect x="1.5" y="1.5" width="15" height="15" rx="2" fill="none" stroke="#7a7a7a" stroke-width="1.1"/><path d="M9 5 V13 M5 9 H13" stroke="#555" stroke-width="1.1"/></svg>
<div class="t" style="left:1432.34px;top:650.87px;font-size:23px;font-weight:400;color:#000;-webkit-text-stroke:0.5px #000;transform:scaleX(1.0381);">Hovedenummer</div>
<div class="t" style="left:1758.98px;top:650.87px;font-size:23px;font-weight:400;color:#252423;transform:scaleX(0.9616);">132</div>
<div class="t" style="left:1927.83px;top:650.87px;font-size:23px;font-weight:400;color:#252423;transform:scaleX(0.9616);">7</div>
<div class="t" style="left:1956.92px;top:650.87px;font-size:23px;font-weight:400;color:#252423;transform:scaleX(0.9616);">0:02:34</div>
<svg style="position:absolute;left:1398px;top:701.9px" width="18" height="18" viewBox="0 0 18 18"><rect x="1.5" y="1.5" width="15" height="15" rx="2" fill="none" stroke="#7a7a7a" stroke-width="1.1"/><path d="M9 5 V13 M5 9 H13" stroke="#555" stroke-width="1.1"/></svg>
<div class="t" style="left:1432.34px;top:701.16px;font-size:23px;font-weight:400;color:#000;-webkit-text-stroke:0.5px #000;transform:scaleX(1.0381);">Logistik</div>
<div class="t" style="left:1783.42px;top:701.16px;font-size:23px;font-weight:400;color:#252423;transform:scaleX(0.9616);">1</div>
<div class="t" style="left:1927.50px;top:701.16px;font-size:23px;font-weight:400;color:#252423;transform:scaleX(0.9616);">0</div>
<div class="t" style="left:1956.92px;top:701.16px;font-size:23px;font-weight:400;color:#252423;transform:scaleX(0.9616);">0:01:21</div>
<svg style="position:absolute;left:1398px;top:752.2px" width="18" height="18" viewBox="0 0 18 18"><rect x="1.5" y="1.5" width="15" height="15" rx="2" fill="none" stroke="#7a7a7a" stroke-width="1.1"/><path d="M9 5 V13 M5 9 H13" stroke="#555" stroke-width="1.1"/></svg>
<div class="t" style="left:1433.18px;top:751.47px;font-size:23px;font-weight:400;color:#000;-webkit-text-stroke:0.5px #000;transform:scaleX(1.0381);">Odense</div>
<div class="t" style="left:1783.09px;top:751.47px;font-size:23px;font-weight:400;color:#252423;transform:scaleX(0.9616);">4</div>
<div class="t" style="left:1927.50px;top:751.47px;font-size:23px;font-weight:400;color:#252423;transform:scaleX(0.9616);">0</div>
<div class="t" style="left:1956.92px;top:751.47px;font-size:23px;font-weight:400;color:#252423;transform:scaleX(0.9616);">0:01:04</div>
<svg style="position:absolute;left:1398px;top:802.5px" width="18" height="18" viewBox="0 0 18 18"><rect x="1.5" y="1.5" width="15" height="15" rx="2" fill="none" stroke="#7a7a7a" stroke-width="1.1"/><path d="M9 5 V13 M5 9 H13" stroke="#555" stroke-width="1.1"/></svg>
<div class="t" style="left:1433.18px;top:801.76px;font-size:23px;font-weight:400;color:#000;-webkit-text-stroke:0.5px #000;transform:scaleX(1.0381);">Omstilling</div>
<div class="t" style="left:1783.09px;top:801.76px;font-size:23px;font-weight:400;color:#252423;transform:scaleX(0.9616);">4</div>
<div class="t" style="left:1927.83px;top:801.76px;font-size:23px;font-weight:400;color:#252423;transform:scaleX(0.9616);">2</div>
<div class="t" style="left:1956.92px;top:801.76px;font-size:23px;font-weight:400;color:#252423;transform:scaleX(0.9616);">0:01:04</div>
<svg style="position:absolute;left:1398px;top:852.9px" width="18" height="18" viewBox="0 0 18 18"><rect x="1.5" y="1.5" width="15" height="15" rx="2" fill="none" stroke="#7a7a7a" stroke-width="1.1"/><path d="M9 5 V13 M5 9 H13" stroke="#555" stroke-width="1.1"/></svg>
<div class="t" style="left:1434.13px;top:852.07px;font-size:23px;font-weight:400;color:#000;-webkit-text-stroke:0.5px #000;transform:scaleX(1.0381);">Vognmand</div>
<div class="t" style="left:1758.76px;top:852.07px;font-size:23px;font-weight:400;color:#252423;transform:scaleX(0.9616);">313</div>
<div class="t" style="left:1927.83px;top:852.07px;font-size:23px;font-weight:400;color:#252423;transform:scaleX(0.9616);">7</div>
<div class="t" style="left:1956.92px;top:852.07px;font-size:23px;font-weight:400;color:#252423;transform:scaleX(0.9616);">0:00:52</div>
<div class="t" style="left:1433.67px;top:902.37px;font-size:23px;font-weight:400;color:#252423;-webkit-text-stroke:0.3px #252423;transform:scaleX(1.0456);">Total</div>
<div class="t" style="left:1759.82px;top:903.21px;font-size:22px;font-weight:400;color:#252423;-webkit-text-stroke:0.5px #252423;transform:scaleX(0.9710);">454</div>
<div class="t" style="left:1918.86px;top:903.21px;font-size:22px;font-weight:400;color:#252423;-webkit-text-stroke:0.5px #252423;transform:scaleX(0.8451);">16</div>
<div class="t" style="left:1957.28px;top:903.21px;font-size:22px;font-weight:400;color:#252423;-webkit-text-stroke:0.5px #252423;transform:scaleX(0.8755);">0:01:22</div>
</body></html>
